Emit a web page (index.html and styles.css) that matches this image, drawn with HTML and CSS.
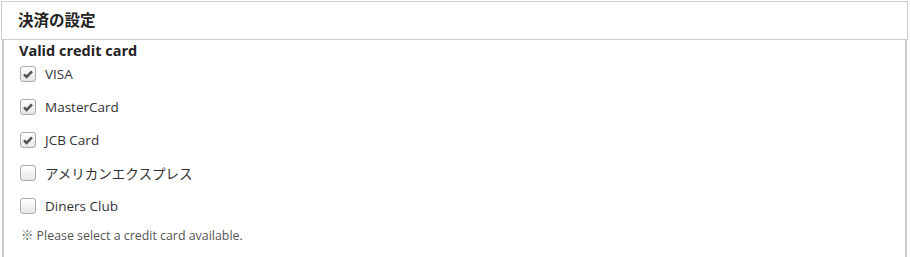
FILE: index.html
```html
<!DOCTYPE html>
<html lang="ja">
<head>
    <meta charset="UTF-8">
    <title>決済の設定</title>
    <link rel="stylesheet" href="styles.css">
</head>
<body>
    <div class="panel">
        <div class="panel-head">決済の設定</div>
        <div class="panel-body">
            <h3>Valid credit card</h3>
            <label class="check">
                <span class="box checked"><svg viewBox="0 0 16 16" width="16" height="16"><path d="M4 8.3l2.6 2.6L12 5.4" fill="none" stroke="#555" stroke-width="2.6"/></svg></span>
                VISA
            </label>
            <label class="check">
                <span class="box checked"><svg viewBox="0 0 16 16" width="16" height="16"><path d="M4 8.3l2.6 2.6L12 5.4" fill="none" stroke="#555" stroke-width="2.6"/></svg></span>
                MasterCard
            </label>
            <label class="check">
                <span class="box checked"><svg viewBox="0 0 16 16" width="16" height="16"><path d="M4 8.3l2.6 2.6L12 5.4" fill="none" stroke="#555" stroke-width="2.6"/></svg></span>
                JCB Card
            </label>
            <label class="check">
                <span class="box"></span>
                アメリカンエクスプレス
            </label>
            <label class="check">
                <span class="box"></span>
                Diners Club
            </label>
            <p class="note">※ Please select a credit card available.</p>
        </div>
    </div>
</body>
</html>
```

FILE: styles.css
```css
body {
    margin: 1px;
    font-family: "Open Sans", "Noto Sans CJK JP", sans-serif;
    color: #333;
    background-color: white;
}
.panel {
    width: 907px;
}
.panel-head {
    height: 37px;
    line-height: 37px;
    padding-left: 16px;
    border: 1px solid #ccc;
    font-size: 15.5px;
    font-weight: bold;
    color: #222;
}
.panel-body {
    margin: 0 0 0 1px;
    padding: 1px 0 20px 15px;
    border-left: 2px solid #ccc;
    border-right: 2px solid #ccc;
    box-sizing: border-box;
    width: 905px;
}
h3 {
    margin: 0 0 -4px 0;
    font-size: 14.5px;
    line-height: 20px;
    color: #222;
}
.check {
    display: flex;
    align-items: center;
    gap: 9px;
    height: 33px;
    font-size: 13.5px;
    color: #333;
}
.box {
    display: block;
    width: 14px;
    height: 14px;
    margin-left: 1px;
    border: 1px solid #aaa;
    border-radius: 3px;
    background: linear-gradient(#fff, #e6e6e6);
}
.box svg {
    display: block;
    margin: -1px;
}
.note {
    margin: 4px 0 0 2px;
    font-size: 12.4px;
    color: #555;
}
```
